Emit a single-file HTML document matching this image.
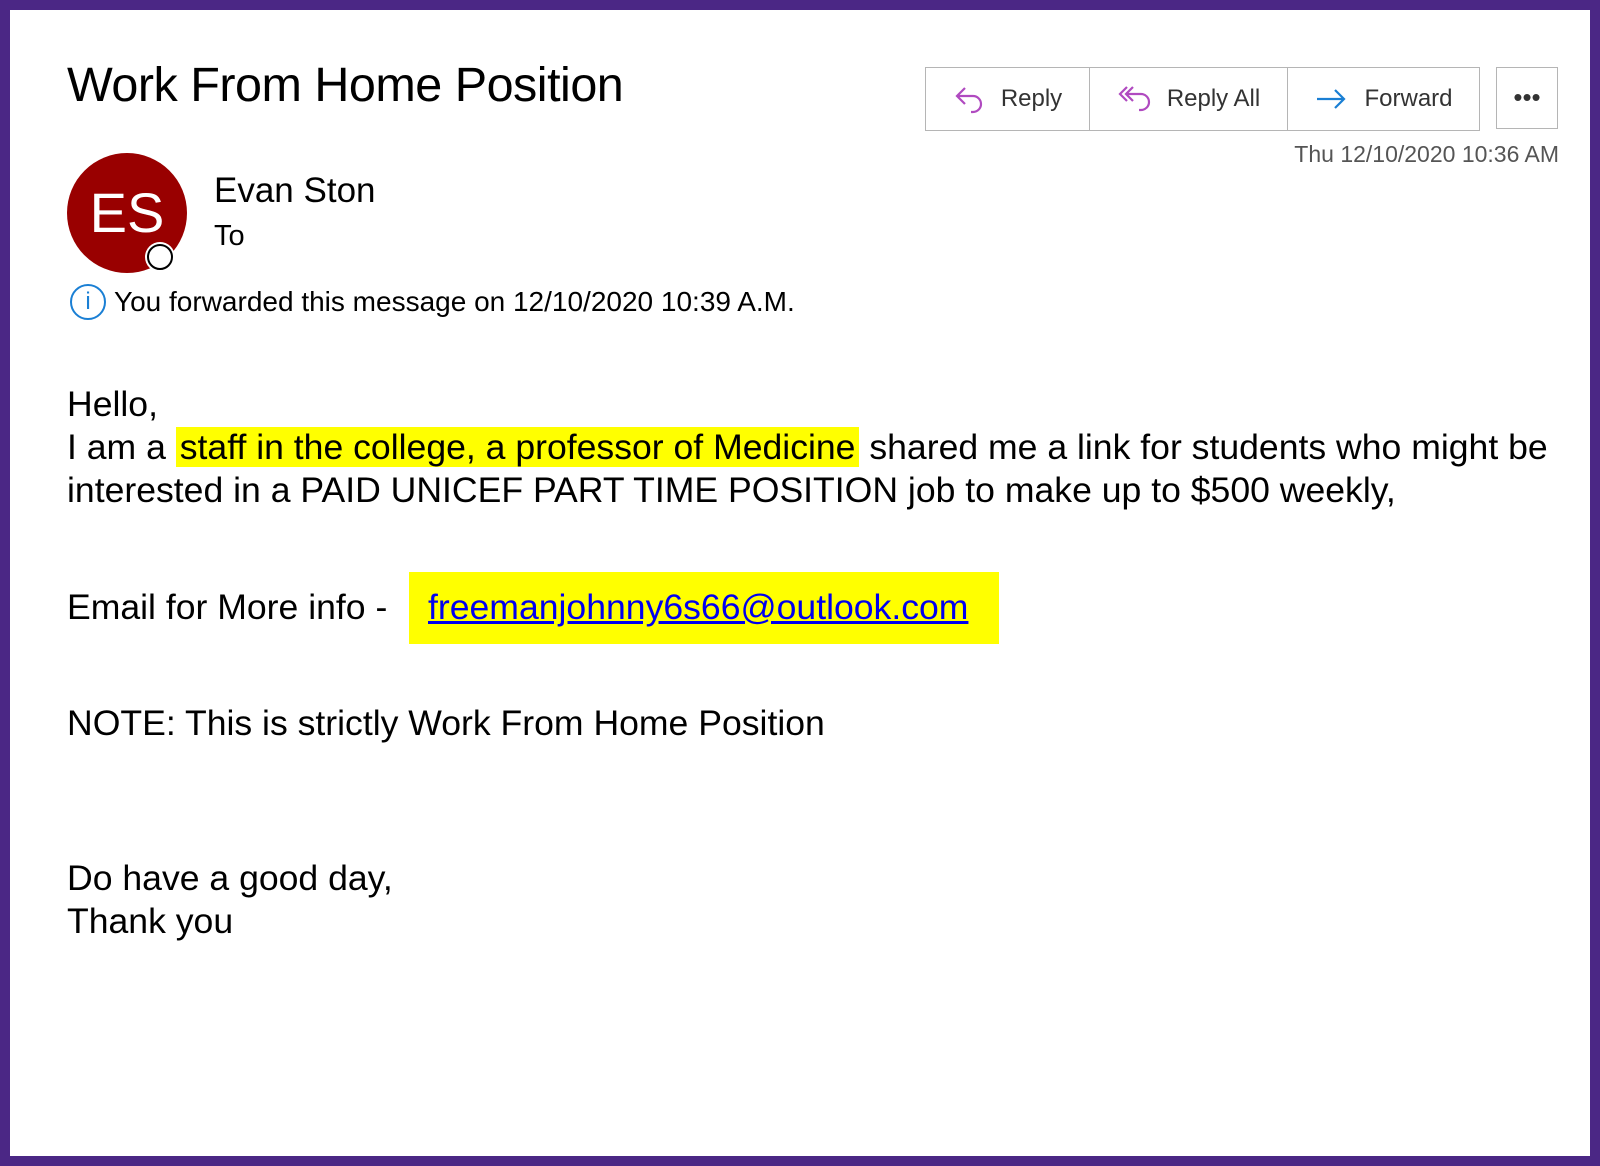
<!DOCTYPE html>
<html><head><meta charset="utf-8"><style>
html,body{margin:0;padding:0}
body{width:1600px;height:1166px;position:relative;overflow:hidden;background:#fff;font-family:"Liberation Sans",Arial,sans-serif;color:#000}
.frame{position:absolute;left:0;top:0;width:1580px;height:1146px;border:10px solid #4b2785;}
.a{position:absolute;white-space:nowrap}
.btns{position:absolute;left:925px;top:67px;width:553px;height:62px;border:1px solid #b5b5b5;display:flex;font-size:24px;color:#333}
.btns div{display:flex;align-items:center;justify-content:center;border-right:1px solid #b5b5b5;height:100%}
.btns div:last-child{border-right:none}
.body{font-size:35.6px;line-height:43px}
.hl{background:#ffff00;padding:0 4px}
</style></head><body>
<div class="frame"></div>
<div class="a" style="left:67px;top:57px;font-size:48.5px;letter-spacing:-0.5px">Work From Home Position</div>
<div class="btns">
 <div style="width:163px"><svg width="34" height="30" viewBox="0 0 34 30" style="margin-right:14px"><path d="M12 4 L4 12 L12 20 M4 12 H20 A8 8 0 0 1 20 28 H18" fill="none" stroke="#b04ac0" stroke-width="2.2"/></svg>Reply</div>
 <div style="width:197px"><svg width="38" height="30" viewBox="0 0 38 30" style="margin-right:12px"><path d="M10 3 L3 10 L10 17 M16 3 L9 10 L16 17 M9 10 H24 A8 8 0 0 1 24 26 H22" fill="none" stroke="#b04ac0" stroke-width="2.2"/></svg>Reply All</div>
 <div style="width:191px"><svg width="34" height="30" viewBox="0 0 34 30" style="margin-right:16px"><path d="M3 15 H30 M21 6 L30 15 L21 24" fill="none" stroke="#1a7fd4" stroke-width="2.2"/></svg>Forward</div>
</div>
<div class="a" style="left:1496px;top:67px;width:62px;height:62px;border:1px solid #b5b5b5;box-sizing:border-box;font-size:26px;text-align:center;line-height:58px;color:#333">•••</div>
<div class="a" style="right:41px;top:141px;font-size:23px;color:#555">Thu 12/10/2020 10:36 AM</div>
<div class="a" style="left:67px;top:153px;width:120px;height:120px;border-radius:50%;background:#990000;color:#fff;font-size:56px;line-height:120px;text-align:center">ES</div>
<div class="a" style="left:147px;top:244px;width:26px;height:26px;border-radius:50%;background:#fff;border:2px solid #000;box-sizing:border-box;box-shadow:0 0 0 2px #fff"></div>
<div class="a" style="left:214px;top:171px;font-size:35px">Evan Ston</div>
<div class="a" style="left:214px;top:220px;font-size:29px">To</div>
<div class="a" style="left:70px;top:284px;width:36px;height:36px;border:2px solid #1a7fd4;border-radius:50%;box-sizing:border-box;color:#1a7fd4;font-size:24px;text-align:center;line-height:32px">i</div>
<div class="a" style="left:114px;top:286px;font-size:28px">You forwarded this message on 12/10/2020 10:39 A.M.</div>
<div class="body">
<div class="a" style="left:67px;top:383px">Hello,</div>
<div class="a" style="left:67px;top:426px">I am a <span class="hl">staff in the college, a professor of Medicine</span> shared me a link for students who might be</div>
<div class="a" style="left:67px;top:469px">interested in a PAID UNICEF PART TIME POSITION job to make up to $500 weekly,</div>
<div class="a" style="left:67px;top:586px">Email for More info -</div>
<div class="a" style="left:409px;top:572px;width:590px;height:72px;background:#ffff00"></div>
<div class="a" style="left:428px;top:586px;color:#0000ee;text-decoration:underline">freemanjohnny6s66@outlook.com</div>
<div class="a" style="left:67px;top:702px">NOTE: This is strictly Work From Home Position</div>
<div class="a" style="left:67px;top:857px">Do have a good day,</div>
<div class="a" style="left:67px;top:900px">Thank you</div>
</div>
</body></html>
